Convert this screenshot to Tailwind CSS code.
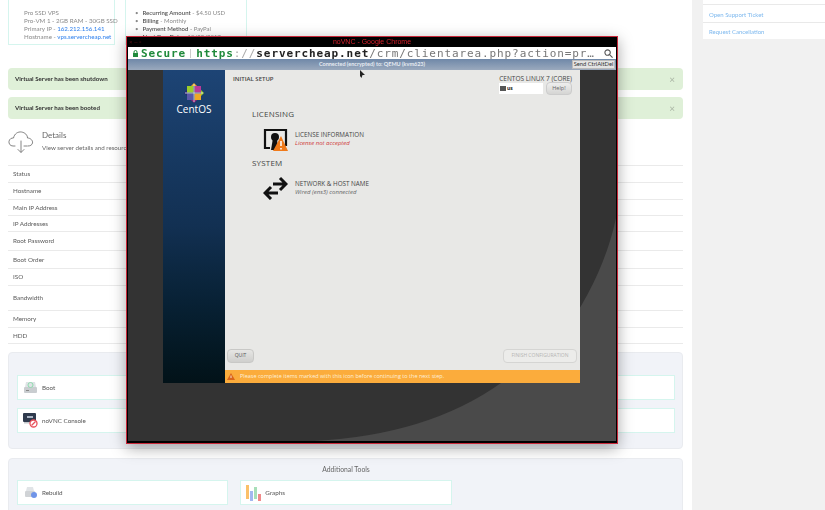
<!DOCTYPE html>
<html lang="en">
<head>
<meta charset="UTF-8">
<title>noVNC Console</title>
<script src="https://cdn.jsdelivr.net/npm/@tailwindcss/browser@4"></script>
</head>
<body class="bg-white">
<div class="relative w-[825px] h-[510px] overflow-hidden flex font-['Lato',sans-serif] text-[6.5px] text-[#666] blur-[0.4px]">

  <!-- page content -->
  <main class="w-[692px] shrink-0 pl-2 pr-[9px]">
    <div class="flex gap-[10px] h-[45px]">
      <div class="w-[107px] border-x border-b border-[#d5f5ee] pl-[15px] pt-[9px] leading-[8.1px] text-[6.2px] text-[#8a8a8a] whitespace-nowrap">
        <p>Pro SSD VPS</p>
        <p>Pro-VM 1 - 2GB RAM - 30GB SSD</p>
        <p>Primary IP - <span class="text-[#2f80ed]">162.212.156.141</span></p>
        <p>Hostname - <span class="text-[#2f80ed]">vps.servercheap.net</span></p>
      </div>
      <div class="w-[122px] border-x border-b border-[#d5f5ee] pl-[9px] pt-[9px] leading-[8.1px] text-[6px] text-[#8a8a8a] whitespace-nowrap">
        <p class="flex gap-[4px]"><span>•</span><span><span class="font-semibold text-[#555]">Recurring Amount</span> - $4.50 USD</span></p>
        <p class="flex gap-[4px]"><span>•</span><span><span class="font-semibold text-[#555]">Billing</span> - Monthly</span></p>
        <p class="flex gap-[4px]"><span>•</span><span><span class="font-semibold text-[#555]">Payment Method</span> - PayPal</span></p>
        <p class="flex gap-[4px]"><span>•</span><span><span class="font-semibold text-[#555]">Next Due Date</span> - 10/28/2017</span></p>
      </div>
    </div>

    <div class="mt-[23px] h-[22px] w-[675px] rounded-sm bg-[#dff0d8] flex items-center justify-between pl-[7px] pr-[8px] text-[6.2px] text-[#333] font-bold">
      <span>Virtual Server has been shutdown</span><span class="text-[10px] font-normal text-[#aab5a5]">×</span>
    </div>
    <div class="mt-[7px] h-[22px] w-[675px] rounded-sm bg-[#dff0d8] flex items-center justify-between pl-[7px] pr-[8px] text-[6.2px] text-[#333] font-bold">
      <span>Virtual Server has been booted</span><span class="text-[10px] font-normal text-[#aab5a5]">×</span>
    </div>

    <div class="h-[46px] flex items-start pt-[11px] gap-[8px]">
      <svg width="26" height="24" viewBox="0 0 26 24" fill="none" stroke="#666" stroke-width="0.8" stroke-linecap="round">
        <path d="M7 16H5C2 16 .6 13.5 1 11.3 1.4 9 3.5 7.8 5.5 8 6.5 3.5 10 1.5 13.5 2 17 2.6 19.500 5 19.500 8 22.500 8 25 10.500 24.500 13 24 15 22.500 16 20 16"/>
        <path d="M13 11V22M10 19.500 13 22.500 16 19.500M16 16H19"/>
      </svg>
      <div>
        <p class="text-[8px] leading-[10px] text-[#666]">Details</p>
        <p class="mt-[3px] text-[6.2px] text-[#666]">View server details and resource usage graphs</p>
      </div>
    </div>

    <div class="w-[675px] border-b border-[#eaeaea] text-[6.3px] text-[#5a5a5a]">
      <div class="pl-[5px] h-[17px] flex items-center border-t border-[#eaeaea]">Status</div>
      <div class="pl-[5px] h-[17px] flex items-center border-t border-[#eaeaea]">Hostname</div>
      <div class="pl-[5px] h-[16px] flex items-center border-t border-[#eaeaea]">Main IP Address</div>
      <div class="pl-[5px] h-[16px] flex items-center border-t border-[#eaeaea]">IP Addresses</div>
      <div class="pl-[5px] h-[19px] flex items-center border-t border-[#eaeaea]">Root Password</div>
      <div class="pl-[5px] h-[18px] flex items-center border-t border-[#eaeaea]">Boot Order</div>
      <div class="pl-[5px] h-[17px] flex items-center border-t border-[#eaeaea]">ISO</div>
      <div class="pl-[5px] h-[25px] flex items-center border-t border-[#eaeaea]">Bandwidth</div>
      <div class="pl-[5px] h-[17px] flex items-center border-t border-[#eaeaea]">Memory</div>
      <div class="pl-[5px] h-[16px] flex items-center border-t border-[#eaeaea]">HDD</div>
    </div>

    <section class="mt-[8px] h-[97px] w-[675px] bg-[#f1f3f8] border border-[#e9ebef] rounded-sm pt-[22px] pl-2 pr-[7px]">
      <div class="grid grid-cols-3 gap-x-3 gap-y-2 text-[6.3px]">
        <div class="h-[25px] bg-white border border-[#d5f5ee] flex items-center gap-[4px] pl-[5px] text-[#555]">
          <svg width="15" height="13" viewBox="0 0 15 13"><path d="M2 6 3 1H12L13 6Z" fill="#dfe3e6"/><rect x="1" y="6" width="13" height="6" rx="1" fill="#c9cdd0"/><rect x="3" y="9" width="3" height="1" fill="#888"/><circle cx="7.500" cy="4" r="2.500" fill="none" stroke="#8fdcae" stroke-width="1"/></svg>
          <span>Boot</span>
        </div>
        <div class="h-[25px] bg-white border border-[#d5f5ee]"></div>
        <div class="h-[25px] bg-white border border-[#d5f5ee]"></div>
        <div class="h-[25px] bg-white border border-[#d5f5ee] flex items-center gap-[4px] pl-[5px] text-[#555]">
          <svg width="15" height="15" viewBox="0 0 15 15"><rect x="0" y="0" width="13" height="9" rx="1" fill="#2f3a4d"/><rect x="4" y="3" width="6" height="2" fill="#a9b4c4"/><rect x="1" y="9" width="10" height="1.500" fill="#c4c8cc"/><circle cx="10.500" cy="10.500" r="3.500" fill="#fff" stroke="#e8505b" stroke-width="1.300"/><path d="M8.500 12.500 12.500 8.500" stroke="#e8505b" stroke-width="1.200"/></svg>
          <span>noVNC Console</span>
        </div>
        <div class="h-[25px] bg-white border border-[#d5f5ee]"></div>
        <div class="h-[25px] bg-white border border-[#d5f5ee]"></div>
      </div>
    </section>

    <section class="mt-[9px] h-[60px] w-[675px] bg-[#f1f3f8] border border-[#e9ebef] rounded-sm pl-2 pr-[7px]">
      <p class="h-[21px] flex items-center justify-center text-[6.8px] text-[#666]">Additional Tools</p>
      <div class="grid grid-cols-3 gap-x-3 text-[6.3px]">
        <div class="h-[25px] bg-white border border-[#d5f5ee] flex items-center gap-[4px] pl-[5px] text-[#555]">
          <svg width="15" height="13" viewBox="0 0 15 13"><path d="M3 5 4 1H10L11 5Z" fill="#e1e4e7"/><rect x="2" y="5" width="10" height="6" rx="1" fill="#d0d3d6"/><circle cx="11" cy="9" r="3" fill="#6f94e8"/></svg>
          <span>Rebuild</span>
        </div>
        <div class="h-[25px] bg-white border border-[#d5f5ee] flex items-center gap-[4px] pl-[6px] text-[#555]">
          <svg width="15" height="16" viewBox="0 0 15 16" class="-ml-[1px]"><rect x="0" y="0" width="3" height="14" fill="#fbc069"/><rect x="4" y="6" width="3" height="10" fill="#a3b8ef"/><rect x="8" y="2" width="3" height="12" fill="#a8dfb8"/><rect x="12" y="9" width="3" height="7" fill="#f08a8a"/></svg>
          <span>Graphs</span>
        </div>
        <div></div>
      </div>
    </section>
  </main>

  <!-- sidebar -->
  <aside class="flex-1 bg-[#f1f1f1] pl-[11px]">
    <div class="bg-white text-[6px] text-[#7db8ee]">
      <div class="h-[5px] border-b border-[#e9e9e9]"></div>
      <div class="mt-[1px] h-[17px] flex items-center pl-[6px] border-b border-[#e9e9e9]">Open Support Ticket</div>
      <div class="h-[16px] flex items-center pl-[6px]">Request Cancellation</div>
    </div>
  </aside>

  <!-- noVNC popup window -->
  <div class="absolute left-[126px] top-[36px] w-[492px] h-[408px] flex flex-col border border-[#c8283a] bg-black shadow-[0_4px_14px_rgba(0,0,0,0.35)]">
    <div class="relative h-[10px] shrink-0 flex items-center justify-center text-[7px] font-['Liberation_Sans',sans-serif] text-[#d8202c]">
      <span class="absolute left-[2px] text-[6px] text-[#5a0f14]">× – ▫</span>
      <span>noVNC - Google Chrome</span>
    </div>
    <div class="h-[12px] mx-[1px] shrink-0 bg-white flex items-center pl-[5px] font-['DejaVu_Sans_Mono',monospace] text-[11px] tracking-[0.9px] leading-none whitespace-nowrap overflow-hidden">
      <svg width="5" height="7" viewBox="0 0 5 7" class="mr-[3px] shrink-0"><path d="M1 3V2a1.500 1.500 0 0 1 3 0V3" fill="none" stroke="#1f8a3b"/><rect y="3" width="5" height="4" fill="#1f8a3b"/></svg>
      <span class="text-[#1f8a3b] font-bold">Secure</span>
      <span class="ml-[4px] mr-[5px] w-[1px] h-[9px] bg-[#ccc]"></span>
      <span class="text-[#1f8a3b] font-bold">https</span><span class="text-[#aaa]">://</span><span class="text-[#222] font-bold">servercheap.net</span><span class="text-[#777]">/crm/clientarea.php?action=pr…</span>
      <svg width="9" height="9" viewBox="0 0 10 10" class="ml-auto mr-[3px] shrink-0" fill="none" stroke="#555" stroke-width="1.200"><circle cx="4" cy="4" r="3"/><path d="M6.500 6.500 9.500 9.500"/></svg>
    </div>
    <div class="relative h-[11px] mx-[1px] shrink-0 bg-gradient-to-b from-[#6f88a8] to-[#9aa9bd] flex items-center justify-center text-[5.5px] font-bold text-[#e6ebf2]">
      <span>Connected (encrypted) to: QEMU (kvm623)</span>
      <span class="absolute right-[1px] top-[1px] h-[9px] w-[43px] bg-[#e4e4e4] border border-[#bbb] flex items-center justify-center text-[#333] font-normal text-[5.8px] whitespace-nowrap">Send CtrlAltDel</span>
    </div>

    <!-- installer canvas -->
    <div class="relative flex-1 mx-[1px] mb-[2px] bg-[#333] overflow-hidden font-['Open_Sans',sans-serif]">
      <svg class="absolute inset-0" width="489" height="371" viewBox="0 0 489 371"><path d="M186 371Q300 365 373 313 425 280 453 236 480 190 489 143V371Z" fill="#4a4a4a"/></svg>
      <div class="relative ml-[35px] flex h-[313px]">
        <div class="w-[62px] bg-gradient-to-b from-[#1d4475] via-[#123052] to-[#021218] flex flex-col items-center pt-[13px] text-white">
          <svg width="20" height="20" viewBox="0 0 20 20">
            <path d="M10 0 13 3H7Z" fill="#efa724"/><path d="M20 10 17 13V7Z" fill="#9ccd2a"/><path d="M10 20 7 17H13Z" fill="#932279"/><path d="M0 10 3 7V13Z" fill="#262577"/>
            <rect x="3" y="3" width="6.500" height="6.500" fill="#9ccd2a"/>
            <rect x="10.500" y="3" width="6.500" height="6.500" fill="#b93a98"/>
            <rect x="3" y="10.500" width="6.500" height="6.500" fill="#5a58a8"/>
            <rect x="10.500" y="10.500" width="6.500" height="6.500" fill="#efa724"/>
            <path d="M10 1V19M1 10H19" stroke="#e8e8e8" stroke-width="0.800"/>
          </svg>
          <p class="mt-[1px] text-[10px] leading-[11px] font-medium">CentOS</p>
        </div>
        <div class="w-[355px] flex flex-col bg-[#e8e8e6] text-[#444]">
          <div class="flex-1">
            <div class="flex justify-between pl-2 pr-2 pt-[5px]">
              <p class="text-[6px] font-semibold leading-[8px]">INITIAL SETUP</p>
              <div class="flex flex-col items-end">
                <p class="text-[6.500px] leading-[8px]">CENTOS LINUX 7 (CORE)</p>
                <div class="flex items-center gap-[3px] -mt-[1px]">
                  <div class="w-[44px] h-[11px] bg-white flex items-center pl-[1px] gap-[1px] text-[5px] font-bold text-[#222]"><span class="w-[6px] h-[5px] bg-[#555]"></span>us</div>
                  <div class="w-[26px] h-[13px] rounded-sm bg-gradient-to-b from-[#eee] to-[#d5d5d3] border border-[#ccc] flex items-center justify-center text-[5.500px] text-[#666]">Help!</div>
                </div>
              </div>
            </div>
            <div class="pl-[27px] mt-[14px]">
              <p class="text-[8px] leading-[10px] tracking-[0.2px]">LICENSING</p>
              <div class="flex items-center gap-[7px] ml-[11px] mt-[9px] h-[23px]">
                <svg width="25" height="24" viewBox="0 0 25 24" class="shrink-0">
                  <path d="M7 20H2V2H23V18" fill="none" stroke="#111" stroke-width="2.200"/>
                  <circle cx="12" cy="9" r="4" fill="#111"/><path d="M10 10H14L15 22H8Z" fill="#111"/>
                  <path d="M18 8 25 23H10Z" fill="#f07a1a"/><path d="M18 13V18M18 20V21.500" stroke="#fff" stroke-width="1.500"/>
                </svg>
                <div class="leading-[9px] -mt-[1px]">
                  <p class="text-[6.3px] font-medium">LICENSE INFORMATION</p>
                  <p class="text-[6px] italic text-[#cf3a3a]">License not accepted</p>
                </div>
              </div>
              <p class="text-[8px] leading-[10px] tracking-[0.2px] mt-[7px]">SYSTEM</p>
              <div class="flex items-center gap-[7px] ml-[11px] mt-[8px] h-[24px]">
                <svg width="25" height="24" viewBox="0 0 25 24" class="shrink-0" fill="none" stroke="#111" stroke-width="3">
                  <path d="M10 8H23M17 2 23 8 17 14"/><path d="M15 17H2M8 11 2 17 8 23"/>
                </svg>
                <div class="leading-[9px] -mt-[1px]">
                  <p class="text-[6.3px] font-medium">NETWORK &amp; HOST NAME</p>
                  <p class="text-[6px] italic text-[#666]">Wired (ens3) connected</p>
                </div>
              </div>
            </div>
          </div>
          <div class="flex justify-between items-center pl-[2px] pr-[3px] h-[24px] pb-[5px]">
            <div class="w-[27px] h-[14px] rounded-sm bg-gradient-to-b from-[#e6e6e4] to-[#cfcfcd] border border-[#c8c8c6] flex items-center justify-center text-[5px] text-[#555]">QUIT</div>
            <div class="w-[74px] h-[14px] rounded-sm bg-[#ececea] border border-[#d5d5d3] flex items-center justify-center text-[5px] text-[#b5b5b3]">FINISH CONFIGURATION</div>
          </div>
          <div class="h-[13px] bg-[#fbac3c] flex items-center pl-[2px] gap-[3px] text-[5.500px] text-[#fdf0da]">
            <svg width="8" height="7" viewBox="0 0 8 7"><path d="M4 0 8 7H0Z" fill="#d9651a"/><path d="M4 2.500V5" stroke="#fff" stroke-width="0.800"/></svg>
            <span class="ml-[2px]">Please complete items marked with this icon before continuing to the next step.</span>
          </div>
        </div>
      </div>
    </div>
    <svg class="absolute left-[233px] top-[33px]" width="6" height="8" viewBox="0 0 6 8"><path d="M0 0 5 5H2.500L1.500 8 0 6Z" fill="#222"/></svg>
  </div>
</div>
</body>
</html>
